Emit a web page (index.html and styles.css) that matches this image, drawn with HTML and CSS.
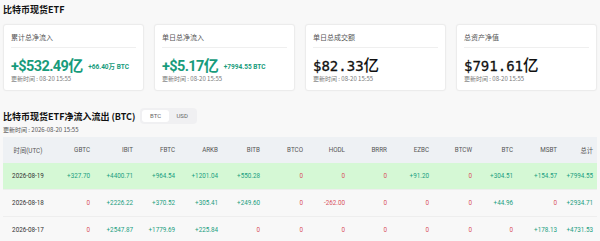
FILE: index.html
```html
<!DOCTYPE html>
<html lang="zh">
<head>
<meta charset="utf-8">
<link rel="stylesheet" href="styles.css">
</head>
<body>
<div class="page">
  <h2 class="title">比特币现货ETF</h2>
  <div class="cards">
    <div class="card">
      <div class="card-label">累计总净流入</div>
      <div class="card-value up"><span class="num">+$532.49</span><span class="unit">亿</span><span class="sub">+66.40万 BTC</span></div>
      <div class="card-time">更新时间 : 08-20 15:55</div>
    </div>
    <div class="card">
      <div class="card-label">单日总净流入</div>
      <div class="card-value up"><span class="num">+$5.17</span><span class="unit">亿</span><span class="sub">+7994.55 BTC</span></div>
      <div class="card-time">更新时间 : 08-20 15:55</div>
    </div>
    <div class="card">
      <div class="card-label">单日总成交额</div>
      <div class="card-value plain"><span class="num">$82.33</span><span class="unit">亿</span></div>
      <div class="card-time">更新时间 : 08-20 15:55</div>
    </div>
    <div class="card">
      <div class="card-label">总资产净值</div>
      <div class="card-value plain"><span class="num">$791.61</span><span class="unit">亿</span></div>
      <div class="card-time">更新时间 : 08-20 15:55</div>
    </div>
  </div>

  <div class="section-head">
    <h2 class="title2">比特币现货ETF净流入流出 (BTC)</h2>
    <div class="toggle"><span class="opt active">BTC</span><span class="opt">USD</span></div>
  </div>
  <div class="section-time">更新时间 : 2026-08-20 15:55</div>

  <div class="table">
    <div class="row head">
      <div class="c first">时间(UTC)</div><div class="c">GBTC</div><div class="c">IBIT</div><div class="c">FBTC</div><div class="c">ARKB</div><div class="c">BITB</div><div class="c">BTCO</div><div class="c">HODL</div><div class="c">BRRR</div><div class="c">EZBC</div><div class="c">BTCW</div><div class="c">BTC</div><div class="c">MSBT</div><div class="c">总计</div>
    </div>
    <div class="row hl">
      <div class="c first date">2026-08-19</div><div class="c p">+327.70</div><div class="c p">+4400.71</div><div class="c p">+964.54</div><div class="c p">+1201.04</div><div class="c p">+550.28</div><div class="c n">0</div><div class="c n">0</div><div class="c n">0</div><div class="c p">+91.20</div><div class="c n">0</div><div class="c p">+304.51</div><div class="c p">+154.57</div><div class="c p">+7994.55</div>
    </div>
    <div class="row">
      <div class="c first date">2026-08-18</div><div class="c n">0</div><div class="c p">+2226.22</div><div class="c p">+370.52</div><div class="c p">+305.41</div><div class="c p">+249.60</div><div class="c n">0</div><div class="c n">-262.00</div><div class="c n">0</div><div class="c n">0</div><div class="c n">0</div><div class="c p">+44.96</div><div class="c n">0</div><div class="c p">+2934.71</div>
    </div>
    <div class="row">
      <div class="c first date">2026-08-17</div><div class="c n">0</div><div class="c p">+2547.87</div><div class="c p">+1779.69</div><div class="c p">+225.84</div><div class="c n">0</div><div class="c n">0</div><div class="c n">0</div><div class="c n">0</div><div class="c n">0</div><div class="c n">0</div><div class="c n">0</div><div class="c p">+178.13</div><div class="c p">+4731.53</div>
    </div>
  </div>
</div>
</body>
</html>
```

FILE: styles.css
```css
* { box-sizing: border-box; }
html, body { margin: 0; padding: 0; }
body {
  background: #f8f8f8;
  font-family: "Noto Sans CJK SC", "Noto Sans", sans-serif;
  color: #222;
  overflow: hidden;
}
.page { padding: 3px 3px 0 3px; }

.title {
  margin: 0;
  font-size: 9px;
  line-height: 13px;
  font-weight: 700;
  color: #111;
}

.cards {
  display: grid;
  grid-template-columns: repeat(4, 1fr);
  column-gap: 10px;
  margin-top: 8px;
}
.card {
  background: #fff;
  border: 1px solid #ececec;
  border-radius: 3px;
  height: 67px;
  padding: 7px 7px 0 7px;
  box-shadow: 0 0 2px rgba(0,0,0,0.03);
}
.card-label {
  font-size: 7px;
  line-height: 10px;
  color: #555;
  padding-bottom: 5px;
  border-bottom: 1px solid #efefef;
}
.card-value {
  display: flex;
  align-items: baseline;
  margin-top: 8px;
  height: 17px;
  line-height: 17px;
}
.card-value.up { color: #179b7b; }
.card-value.up .num {
  font-family: "Roboto", "Noto Sans", sans-serif;
  font-weight: 700;
  font-size: 14.5px;
  letter-spacing: -0.6px;
}
.card-value.up .unit {
  font-weight: 700;
  font-size: 15px;
}
.card-value .sub {
  font-family: "Roboto", "Noto Sans CJK SC", sans-serif;
  font-weight: 700;
  font-size: 6.5px;
  margin-left: 5px;
  position: relative;
  top: -2px;
}
.card-value.plain { color: #111; }
.card-value.plain .num {
  font-family: "DejaVu Sans Mono", monospace;
  font-size: 14px;
  -webkit-text-stroke: 0.3px #111;
}
.card-value.plain .unit {
  font-size: 15.5px;
  font-weight: 500;
}
.card-time {
  margin-top: 2px;
  font-size: 6px;
  line-height: 8px;
  color: #777;
}

.section-head {
  display: flex;
  align-items: center;
  margin-top: 17px;
  height: 16px;
}
.title2 {
  margin: 0;
  font-size: 9px;
  line-height: 13px;
  font-weight: 700;
  color: #111;
}
.toggle {
  display: flex;
  margin-left: 5px;
  background: #f0f0f2;
  border-radius: 4px;
  padding: 2px;
  height: 16px;
  width: 57px;
}
.opt {
  flex: 1;
  text-align: center;
  font-family: "Roboto", sans-serif;
  font-size: 6px;
  line-height: 12px;
  color: #666;
  border-radius: 3px;
}
.opt.active { background: #fff; }
.section-time {
  font-size: 6px;
  line-height: 9px;
  margin-top: 1px;
  color: #555;
}

.table { margin-top: 3px; }
.row {
  display: grid;
  grid-template-columns: 50px 42px 43px 42px 43px 42px 43px 42px 42px 42px 43px 41px 44px 36px;
  height: 27px;
  align-items: center;
  border-bottom: 1px solid #eeeeee;
  font-family: "Roboto", "Noto Sans CJK SC", sans-serif;
  font-size: 6.3px;
}
.row.head {
  background: #eef1f4;
  height: 26px;
  color: #555;
  border-bottom: none;
}
.row.hl { background: #d5f8d5; }
.c { text-align: right; padding-right: 5px; white-space: nowrap; }
.c.first { text-align: center; padding-right: 0; }
.date { color: #333; }
.p { color: #1a9e80; }
.n { color: #d9505e; }
```
